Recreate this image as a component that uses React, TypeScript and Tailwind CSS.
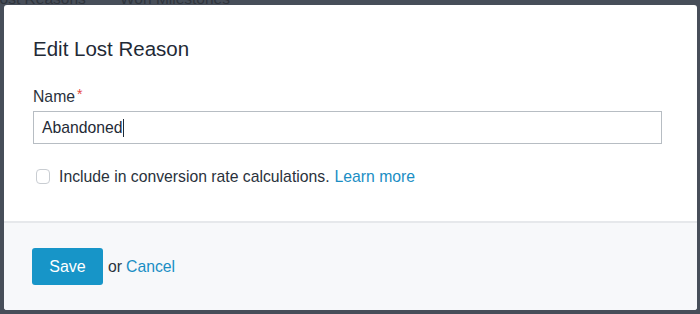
import React from "react";

export default function App() {
  return (
    <div
      className="w-[700px] h-[314px] bg-[#474e59] overflow-hidden relative"
      style={{ fontFamily: '"Liberation Sans", Arial, sans-serif' }}
    >
      <span className="absolute left-[-9px] top-[-9px] text-[15.5px] leading-[16px] text-[#2a2f36] opacity-80">Lost Reasons</span>
      <span className="absolute left-[120px] top-[-9px] text-[15.5px] leading-[16px] text-[#2a2f36] opacity-80">Won Milestones</span>
      <div className="absolute left-[4px] top-[5px] w-[693px] h-[305px] bg-white rounded-[3px] flex flex-col overflow-hidden">
        <div className="flex-1 px-[29px] pt-[32px]">
          <h1 className="text-[20.5px] leading-[24px] text-[#1f2a36]">Edit Lost Reason</h1>
          <div className="mt-[27px] text-[15.75px] leading-[18px] text-[#2a323c]">
            Name<span className="relative top-[-3px] text-[#e5473d] text-[14px] ml-[2px]">*</span>
          </div>
          <div className="mt-[5px] w-[629px] h-[33px] border border-[#b7bdc3] flex items-center pl-[8px] text-[15.75px] text-[#1f2a36]">
            Abandoned<span className="inline-block w-[1px] h-[18px] bg-[#1f2a36]" />
          </div>
          <div className="mt-[21px] flex items-center text-[15.75px] text-[#2a323c]">
            <span className="ml-[3px] w-[14px] h-[15px] rounded-[4px] border border-[#c9cdd2] bg-white" />
            <span className="ml-[9px]">Include in conversion rate calculations.</span>
            <span className="ml-[5px] text-[#1a8ec4]">Learn more</span>
          </div>
        </div>
        <div className="h-[89px] bg-[#f7f8fa] border-t-[2px] border-[#e6e8eb] flex items-center px-[28px]">
          <button className="w-[71px] h-[37px] bg-[#1795c8] rounded-[3px] text-white text-[16px]">Save</button>
          <span className="ml-[5px] text-[15.75px] text-[#2a323c]">or</span>
          <span className="ml-[4px] text-[15.75px] text-[#1a8ec4]">Cancel</span>
        </div>
      </div>
    </div>
  );
}
